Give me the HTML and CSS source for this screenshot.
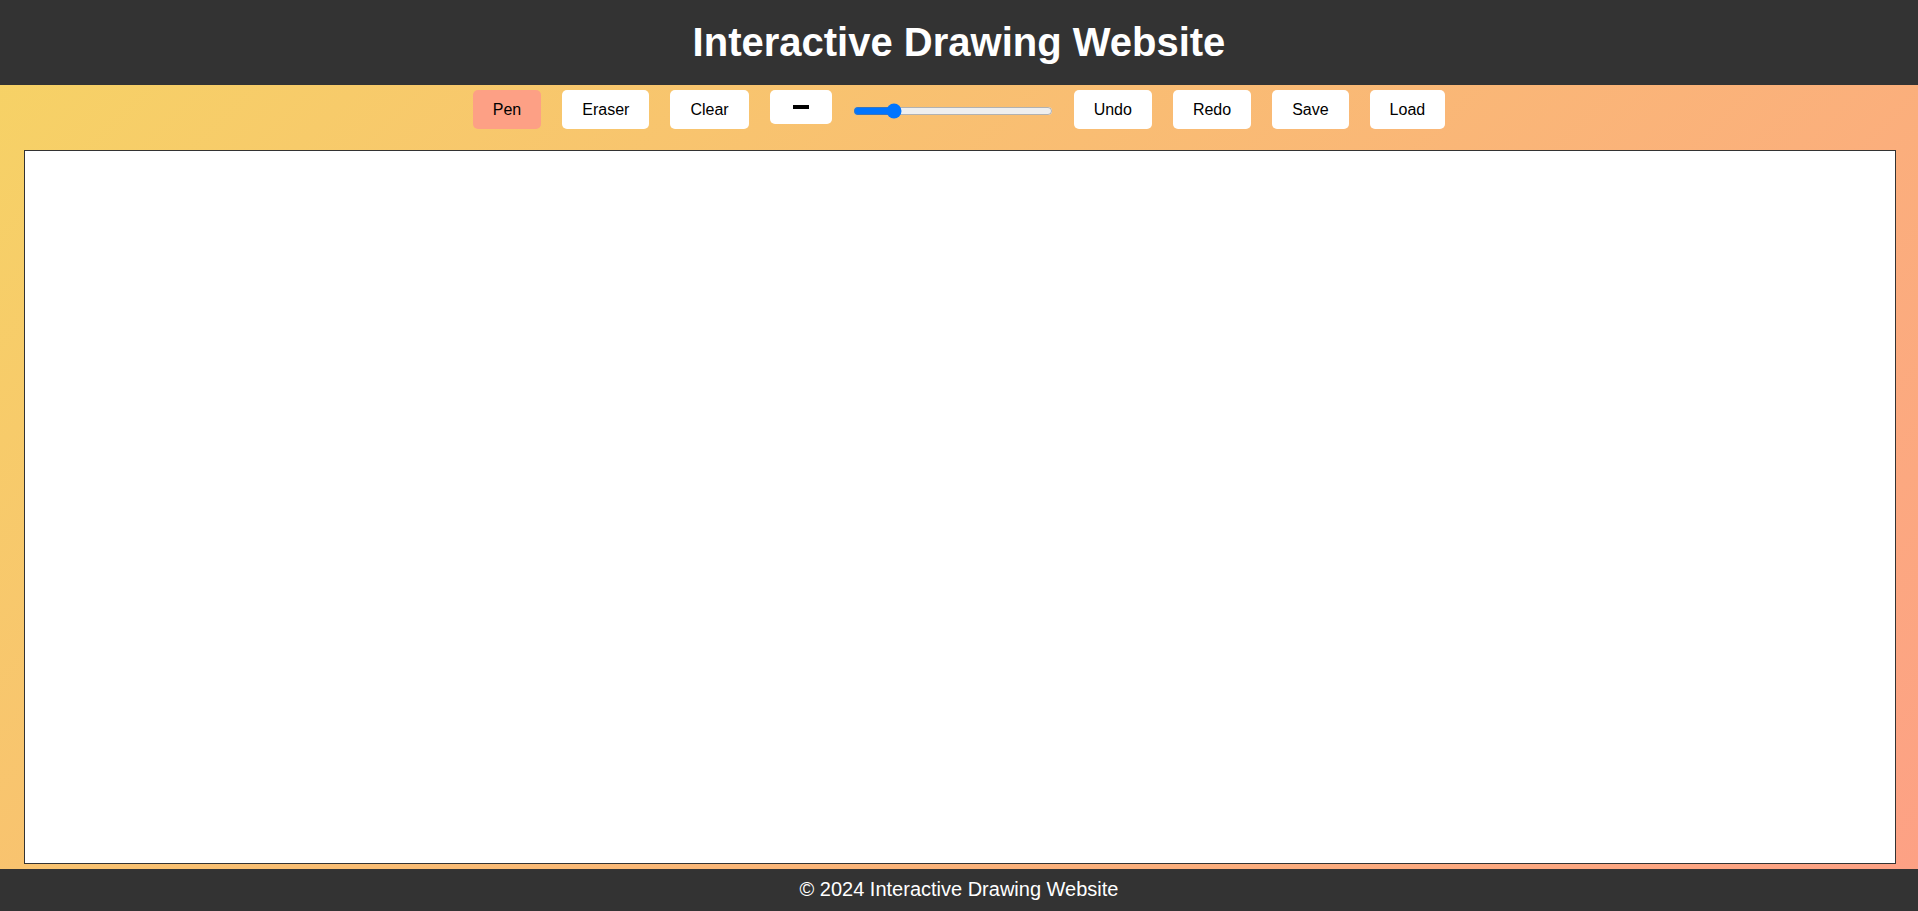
FILE: index.html
```html
<!DOCTYPE html>
<html lang="en">
<head>
<meta charset="utf-8">
<title>Interactive Drawing Website</title>
<link rel="stylesheet" href="styles.css">
</head>
<body>
<header class="site-header">
  <h1 class="site-title">Interactive Drawing Website</h1>
</header>
<main class="main">
  <div class="toolbar">
    <button class="tool-btn active">Pen</button>
    <button class="tool-btn">Eraser</button>
    <button class="tool-btn">Clear</button>
    <div class="color-picker"><span class="color-swatch"></span></div>
    <input class="size-slider" type="range" min="1" max="50" value="10">
    <button class="tool-btn">Undo</button>
    <button class="tool-btn">Redo</button>
    <button class="tool-btn">Save</button>
    <button class="tool-btn">Load</button>
  </div>
  <div class="canvas-wrap">
    <canvas class="drawing-canvas" width="1870" height="712"></canvas>
  </div>
</main>
<footer class="site-footer">
  <p class="footer-text">&copy; 2024 Interactive Drawing Website</p>
</footer>
</body>
</html>
```

FILE: styles.css
```css
html, body {
  margin: 0;
  padding: 0;
  height: 911px;
  overflow: hidden;
}

body {
  font-family: "Liberation Sans", Arial, sans-serif;
  background: linear-gradient(135deg, #f6d365 0%, #fda085 100%);
  display: flex;
  flex-direction: column;
}

.site-header {
  background: #333333;
  color: #ffffff;
  text-align: center;
  padding: 19px 0 20px;
}

.site-title {
  margin: 0;
  font-size: 40px;
  font-weight: bold;
  line-height: 46px;
}

.main {
  flex: 1;
  display: flex;
  flex-direction: column;
}

.toolbar {
  display: flex;
  justify-content: center;
  align-items: center;
  gap: 21px;
  padding-top: 5px;
}

.tool-btn {
  font-family: "Liberation Sans", Arial, sans-serif;
  font-size: 16px;
  line-height: 19px;
  padding: 10px 20px;
  border: none;
  border-radius: 5px;
  background: #ffffff;
  color: #000000;
  cursor: pointer;
}

.tool-btn.active {
  background: #fda085;
}

.color-picker {
  align-self: flex-start;
  width: 62px;
  height: 34px;
  background: #ffffff;
  border-radius: 5px;
  display: flex;
  align-items: center;
  justify-content: center;
}

.color-swatch {
  display: block;
  width: 16px;
  height: 4px;
  background: #000000;
}

.size-slider {
  width: 200px;
  margin: 2px 0 0;
}

.canvas-wrap {
  padding: 21px 22px 5px 24px;
}

.drawing-canvas {
  display: block;
  width: 1870px;
  height: 712px;
  background: #ffffff;
  border: 1px solid #333333;
}

.site-footer {
  background: #333333;
  color: #ffffff;
  text-align: center;
  padding: 9px 0 10px;
}

.footer-text {
  margin: 0;
  font-size: 20px;
  line-height: 23px;
}
```
